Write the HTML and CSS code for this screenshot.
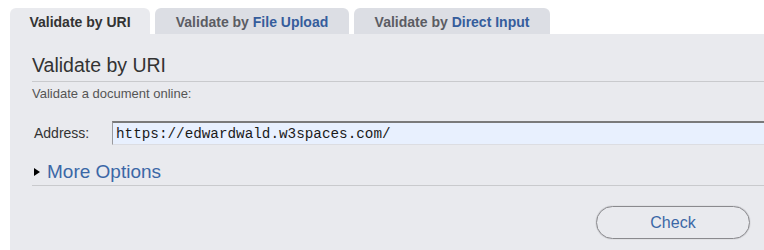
FILE: index.html
```html
<!DOCTYPE html>
<html lang="en">
    <head>
        <meta charset="UTF-8">
        <meta name="viewport" content="width=device-width, initial-scale=1.0">
        <title>Markup Validation Service</title>
        <link rel="stylesheet" href="styles.css">
    </head>
<body>
    <div class="validator">
        <ul class="tabs">
            <li class="tab tab-uri active">Validate by <span>URI</span></li>
            <li class="tab tab-upload">Validate by <span>File Upload</span></li>
            <li class="tab tab-direct">Validate by <span>Direct Input</span></li>
        </ul>

        <div class="panel">
            <h2>Validate by URI</h2>
            <p class="intro">Validate a document online:</p>

            <div class="field">
                <label for="uri">Address:</label>
                <input type="text" id="uri" value="https://edwardwald.w3spaces.com/">
            </div>

            <details class="options">
                <summary>More Options</summary>
            </details>

            <div class="actions">
                <button type="button">Check</button>
            </div>
        </div>
    </div>
</body>
</html>
```

FILE: styles.css
```css
body {
    font-family: 'Liberation Sans', Arial, sans-serif;
    background-color: #ffffff;
    margin: 0;
    padding: 0;
    overflow: hidden;
}

.validator {
    margin: 8px 0 0 10px;
    width: 800px;
}

.tabs {
    display: flex;
    align-items: flex-end;
    gap: 5px;
    list-style: none;
    margin: 0;
    padding: 0;
}

.tab {
    height: 24px;
    padding-top: 2px;
    line-height: 24px;
    text-align: center;
    font-size: 14px;
    font-weight: bold;
    color: #5b5c63;
    background-color: #dcdee4;
    border-radius: 6px 6px 0 0;
    box-sizing: content-box;
}

.tab span {
    color: #355d9c;
}

.tab.active {
    color: #333333;
    background-color: #e9eaee;
}

.tab.active span {
    color: #333333;
}

.tab-uri {
    width: 140px;
}

.tab-upload {
    width: 194px;
}

.tab-direct {
    width: 196px;
}

.panel {
    background-color: #e9eaee;
    padding: 21px 0 11px 22px;
}

h2 {
    margin: 0;
    padding-bottom: 5px;
    font-size: 19.5px;
    font-weight: normal;
    line-height: 21px;
    color: #333333;
    border-bottom: 1px solid #c9cacd;
}

.intro {
    margin: 4px 0 0;
    font-size: 13px;
    line-height: 15px;
    color: #555555;
}

.field {
    display: flex;
    align-items: center;
    margin-top: 20px;
    height: 24px;
}

.field label {
    width: 78px;
    margin-left: 2px;
    font-size: 14px;
    color: #333333;
}

.field input {
    flex: 1;
    height: 24px;
    box-sizing: border-box;
    margin: 0;
    padding: 0 3px;
    font-family: 'Liberation Mono', 'Courier New', monospace;
    font-size: 14.3px;
    color: #1a1a1a;
    background-color: #e8f0fe;
    border-style: solid;
    border-width: 2px 1px 1px 1px;
    border-color: #7a7a7a #b4b4b8 #dcdde2 #9a9a9e;
    outline: none;
}

.options {
    margin-top: 16px;
}

.options summary {
    display: flex;
    align-items: center;
    list-style: none;
    padding-bottom: 2px;
    font-size: 19px;
    line-height: 22px;
    color: #3b67a6;
    border-bottom: 1px solid #c9cacd;
    cursor: pointer;
}

.options summary::-webkit-details-marker {
    display: none;
}

.options summary::before {
    content: '';
    margin: 0 7px 0 2px;
    border-left: 6px solid #000000;
    border-top: 4.5px solid transparent;
    border-bottom: 4.5px solid transparent;
}

.actions {
    display: flex;
    justify-content: flex-end;
    width: 718px;
    margin-top: 20px;
}

.actions button {
    width: 154px;
    height: 33px;
    font-family: 'Liberation Sans', Arial, sans-serif;
    font-size: 16px;
    color: #3b67a6;
    background-color: transparent;
    border: 1px solid #8a8a8e;
    border-radius: 17px;
    box-shadow: 0 0 1px #8a8a8e;
    cursor: pointer;
}
```
